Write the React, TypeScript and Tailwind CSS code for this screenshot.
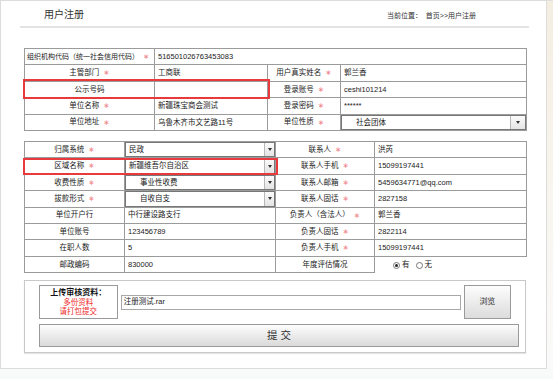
import React from "react";

const Star = () => (
  <span className="ml-[4px] inline-block align-middle font-['DejaVu_Sans',sans-serif] text-[7.5px] text-[#ef8389]">∗</span>
);

function FakeSelect({ value, pad, arrow }: { value: string; pad: string; arrow: string }) {
  return (
    <div className="flex h-full w-full items-stretch border border-[#777] bg-white">
      <div className={`flex flex-1 items-center ${pad}`}>{value}</div>
      <div
        className={`flex ${arrow} items-center justify-center border-l border-[#b8b8b8] bg-gradient-to-b from-[#fbfbfb] to-[#e4e4e4]`}
      >
        <span className="h-0 w-0 border-l-[2.5px] border-r-[2.5px] border-t-[3px] border-l-transparent border-r-transparent border-t-[#333]" />
      </div>
    </div>
  );
}

const td = "border border-[#9b9b9b] p-0 h-[16.4px] whitespace-nowrap";
const lbl = `${td} text-center`;
const val = `${td} pl-[3px]`;

function Radio({ checked }: { checked?: boolean }) {
  return (
    <span className="inline-flex h-[7px] w-[7px] items-center justify-center rounded-full border border-[#777] bg-white">
      {checked && <span className="h-[3px] w-[3px] rounded-full bg-[#222]" />}
    </span>
  );
}

export default function App() {
  return (
    <div className="flex h-[379px] w-[553px] bg-[#f8f9f9] font-['Liberation_Sans','Noto_Sans_CJK_SC',sans-serif] text-[7.5px] leading-none text-[#222]">
      <div className="h-[369px] w-[547px] shrink-0 border border-[#dcdcdc] bg-white">
        <div className="flex h-[25px] items-center justify-between pl-[43px] pr-[70px] pt-[3px]">
          <span className="text-[10px] text-[#333]">用户注册</span>
          <span className="text-[7px] text-[#333]">当前位置：&nbsp; 首页&gt;&gt;用户注册</span>
        </div>
        <div className="ml-[19px] h-[2px] w-[509px] bg-[#e3e3e3]" />

        <div className="relative ml-[23px] mt-[20px] w-[502px]">
          <table className="w-[502px] table-fixed border-collapse">
            <colgroup>
              <col className="w-[130px]" />
              <col className="w-[113px]" />
              <col className="w-[73px]" />
              <col className="w-[186px]" />
            </colgroup>
            <tbody>
              <tr>
                <td className={`${td} pl-[2px] text-[7px]`}>
                  组织机构代码（统一社会信用代码）
                  <Star />
                </td>
                <td className={val} colSpan={3}>
                  516501026763453083
                </td>
              </tr>
              <tr>
                <td className={lbl}>
                  主管部门
                  <Star />
                </td>
                <td className={val}>工商联</td>
                <td className={lbl}>
                  用户真实姓名
                  <Star />
                </td>
                <td className={val}>郭兰香</td>
              </tr>
              <tr>
                <td className={lbl}>公示号码</td>
                <td className={val}></td>
                <td className={lbl}>
                  登录账号
                  <Star />
                </td>
                <td className={val}>ceshi101214</td>
              </tr>
              <tr>
                <td className={lbl}>
                  单位名称
                  <Star />
                </td>
                <td className={val}>新疆珠宝商会测试</td>
                <td className={lbl}>
                  登录密码
                  <Star />
                </td>
                <td className={val}>******</td>
              </tr>
              <tr>
                <td className={lbl}>
                  单位地址
                  <Star />
                </td>
                <td className={val}>乌鲁木齐市文艺路11号</td>
                <td className={lbl}>
                  单位性质
                  <Star />
                </td>
                <td className={td}>
                  <FakeSelect value="社会团体" pad="pl-[14px]" arrow="w-[15px]" />
                </td>
              </tr>
            </tbody>
          </table>
          <div className="absolute left-[-1px] top-[31px] h-[20px] w-[247px] border-2 border-[#e8393c]" />
        </div>

        <div className="relative ml-[23px] mt-[10px] w-[502px]">
          <table className="w-[502px] table-fixed border-collapse">
            <colgroup>
              <col className="w-[100px]" />
              <col className="w-[151px]" />
              <col className="w-[99px]" />
              <col className="w-[152px]" />
            </colgroup>
            <tbody>
              <tr>
                <td className={lbl}>
                  归属系统
                  <Star />
                </td>
                <td className={td}>
                  <FakeSelect value="民政" pad="pl-[3px]" arrow="w-[10px]" />
                </td>
                <td className={lbl}>
                  联系人
                  <Star />
                </td>
                <td className={val}>洪芮</td>
              </tr>
              <tr>
                <td className={lbl}>
                  区域名称
                  <Star />
                </td>
                <td className={td}>
                  <FakeSelect value="新疆维吾尔自治区" pad="pl-[3px]" arrow="w-[10px]" />
                </td>
                <td className={lbl}>
                  联系人手机
                  <Star />
                </td>
                <td className={val}>15099197441</td>
              </tr>
              <tr>
                <td className={lbl}>
                  收费性质
                  <Star />
                </td>
                <td className={td}>
                  <FakeSelect value="事业性收费" pad="pl-[14px]" arrow="w-[10px]" />
                </td>
                <td className={lbl}>
                  联系人邮箱
                  <Star />
                </td>
                <td className={val}>5459634771@qq.com</td>
              </tr>
              <tr>
                <td className={lbl}>
                  拔款形式
                  <Star />
                </td>
                <td className={td}>
                  <FakeSelect value="自收自支" pad="pl-[14px]" arrow="w-[10px]" />
                </td>
                <td className={lbl}>
                  联系人固话
                  <Star />
                </td>
                <td className={val}>2827158</td>
              </tr>
              <tr>
                <td className={lbl}>单位开户行</td>
                <td className={val}>中行建设路支行</td>
                <td className={lbl}>
                  负责人（含法人）
                  <Star />
                </td>
                <td className={val}>郭兰香</td>
              </tr>
              <tr>
                <td className={lbl}>单位账号</td>
                <td className={val}>123456789</td>
                <td className={lbl}>
                  负责人固话
                  <Star />
                </td>
                <td className={val}>2822114</td>
              </tr>
              <tr>
                <td className={lbl}>在职人数</td>
                <td className={val}>5</td>
                <td className={lbl}>
                  负责人手机
                  <Star />
                </td>
                <td className={val}>15099197441</td>
              </tr>
              <tr>
                <td className={lbl}>邮政编码</td>
                <td className={val}>830000</td>
                <td className={lbl}>年度评估情况</td>
                <td className="h-[16.4px] border-l border-t border-[#9b9b9b] p-0 pl-[18px]">
                  <span className="inline-flex items-center gap-[2px]">
                    <Radio checked />
                    <span>有</span>
                    <span className="ml-[2px]" />
                    <Radio />
                    <span>无</span>
                  </span>
                </td>
              </tr>
            </tbody>
          </table>
          <div className="absolute left-[-1px] top-[17px] h-[17px] w-[255px] border-2 border-[#e8393c]" />
        </div>

        <div className="ml-[23px] mt-[7px] flex h-[73px] w-[502px] flex-col gap-[5px] border border-[#c9c9c9] px-[14px] pt-[4px] shadow-[0_1px_1px_#e5e5e5]">
          <div className="flex h-[34px] items-center">
            <div className="flex h-[34px] w-[80px] flex-col items-center justify-center border border-[#9a9a9a]">
              <span className="text-[8px] font-bold text-[#111]">上传审核资料：</span>
              <span className="mt-[2px] text-[7.5px] text-[#f02b2b]">多份资料</span>
              <span className="mt-[2px] text-[7.5px] text-[#f02b2b]">请打包提交</span>
            </div>
            <div className="ml-[3px] flex h-[15px] w-[346px] items-center border border-[#a8a8a8] pl-[2px]">
              注册测试.rar
            </div>
            <button className="ml-[3px] flex h-[34px] w-[48px] items-center justify-center border border-[#9a9a9a] bg-gradient-to-b from-[#fdfdfd] to-[#dcdcdc] text-[8px] text-[#333]">
              浏览
            </button>
          </div>
          <button className="flex h-[23px] w-[480px] items-center justify-center border border-[#9a9a9a] bg-gradient-to-b from-[#fdfdfd] to-[#dadada] text-[10.5px] text-[#333]">
            提&nbsp;交
          </button>
        </div>
      </div>
      <div className="h-[369px] flex-1 border-t border-[#e0e0e0] bg-gradient-to-b from-[#f4eee1] via-[#f8f5ee] to-[#fafafa]" />
    </div>
  );
}
